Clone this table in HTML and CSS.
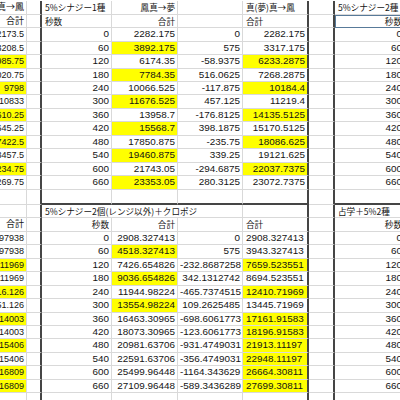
FILE: index.html
```html
<!DOCTYPE html>
<html lang="ja">
<head>
<meta charset="utf-8">
<link rel="stylesheet" href="styles.css">
</head>
<body>
<div class="sheet">
  <div class="row"><div class="j">鳳真→鳳</div><div></div><div class="j l">5%シナジー1種</div><div class="j">鳳真→夢</div><div></div><div class="j l">真(夢)真→鳳</div><div></div><div class="j l">5%シナジー2種</div><div></div></div>
  <div class="row"><div class="j">合計</div><div></div><div class="j l">秒数</div><div class="j">合計</div><div></div><div class="j l">合計</div><div></div><div class="j sel">秒数</div><div></div></div>
  <div class="row"><div>2173.5</div><div></div><div>0</div><div>2282.175</div><div>0</div><div>2282.175</div><div></div><div>0</div><div></div></div>
  <div class="row"><div>3208.5</div><div></div><div>60</div><div class="y">3892.175</div><div>575</div><div>3317.175</div><div></div><div>60</div><div></div></div>
  <div class="row"><div class="y">5985.75</div><div></div><div>120</div><div>6174.35</div><div>-58.9375</div><div class="y">6233.2875</div><div></div><div>120</div><div></div></div>
  <div class="row"><div>7020.75</div><div></div><div>180</div><div class="y">7784.35</div><div>516.0625</div><div>7268.2875</div><div></div><div>180</div><div></div></div>
  <div class="row"><div class="y">9798</div><div></div><div>240</div><div>10066.525</div><div>-117.875</div><div class="y">10184.4</div><div></div><div>240</div><div></div></div>
  <div class="row"><div>10833</div><div></div><div>300</div><div class="y">11676.525</div><div>457.125</div><div>11219.4</div><div></div><div>300</div><div></div></div>
  <div class="row"><div class="y">13610.25</div><div></div><div>360</div><div>13958.7</div><div>-176.8125</div><div class="y">14135.5125</div><div></div><div>360</div><div></div></div>
  <div class="row"><div>14645.25</div><div></div><div>420</div><div class="y">15568.7</div><div>398.1875</div><div>15170.5125</div><div></div><div>420</div><div></div></div>
  <div class="row"><div class="y">17422.5</div><div></div><div>480</div><div>17850.875</div><div>-235.75</div><div class="y">18086.625</div><div></div><div>480</div><div></div></div>
  <div class="row"><div>18457.5</div><div></div><div>540</div><div class="y">19460.875</div><div>339.25</div><div>19121.625</div><div></div><div>540</div><div></div></div>
  <div class="row"><div class="y">21234.75</div><div></div><div>600</div><div>21743.05</div><div>-294.6875</div><div class="y">22037.7375</div><div></div><div>600</div><div></div></div>
  <div class="row"><div>22269.75</div><div></div><div>660</div><div class="y">23353.05</div><div>280.3125</div><div>23072.7375</div><div></div><div>660</div><div></div></div>
  <div class="row gap"><div></div><div></div><div></div><div></div><div></div><div></div><div></div><div></div><div></div></div>
  <div class="row t2"><div></div><div></div><div class="j l span">5%シナジー2個(レンジ以外)＋クロポジ</div><div></div><div></div><div class="j l">占学＋5%2種</div><div></div></div>
  <div class="row"><div class="j">合計</div><div></div><div class="j">秒数</div><div class="j">合計</div><div></div><div class="j l">合計</div><div></div><div class="j">秒数</div><div></div></div>
  <div class="row"><div>2797.197938</div><div></div><div>0</div><div>2908.327413</div><div>0</div><div class="l">2908.327413</div><div></div><div>0</div><div></div></div>
  <div class="row"><div>3832.197938</div><div></div><div>60</div><div class="y">4518.327413</div><div>575</div><div class="l">3943.327413</div><div></div><div>60</div><div></div></div>
  <div class="row"><div class="y">7310.411969</div><div></div><div>120</div><div>7426.654826</div><div>-232.8687258</div><div class="l y">7659.523551</div><div></div><div>120</div><div></div></div>
  <div class="row"><div>8345.411969</div><div></div><div>180</div><div class="y">9036.654826</div><div>342.1312742</div><div class="l">8694.523551</div><div></div><div>180</div><div></div></div>
  <div class="row"><div class="y">11816.126</div><div></div><div>240</div><div>11944.98224</div><div>-465.7374515</div><div class="l y">12410.71969</div><div></div><div>240</div><div></div></div>
  <div class="row"><div>12851.126</div><div></div><div>300</div><div class="y">13554.98224</div><div>109.2625485</div><div class="l">13445.71969</div><div></div><div>300</div><div></div></div>
  <div class="row"><div class="y">16302.14003</div><div></div><div>360</div><div>16463.30965</div><div>-698.6061773</div><div class="l y">17161.91583</div><div></div><div>360</div><div></div></div>
  <div class="row"><div>17337.14003</div><div></div><div>420</div><div>18073.30965</div><div>-123.6061773</div><div class="l y">18196.91583</div><div></div><div>420</div><div></div></div>
  <div class="row"><div class="y">20788.15406</div><div></div><div>480</div><div>20981.63706</div><div>-931.4749031</div><div class="l y">21913.11197</div><div></div><div>480</div><div></div></div>
  <div class="row"><div>21823.15406</div><div></div><div>540</div><div>22591.63706</div><div>-356.4749031</div><div class="l y">22948.11197</div><div></div><div>540</div><div></div></div>
  <div class="row"><div class="y">25274.16809</div><div></div><div>600</div><div>25499.96448</div><div>-1164.343629</div><div class="l y">26664.30811</div><div></div><div>600</div><div></div></div>
  <div class="row"><div class="y">26309.16809</div><div></div><div>660</div><div>27109.96448</div><div>-589.3436289</div><div class="l y">27699.30811</div><div></div><div>660</div><div></div></div>
  <div class="row"><div></div><div></div><div></div><div></div><div></div><div></div><div></div><div></div><div></div></div>
</div>
</body>
</html>
```

FILE: styles.css
```css
html, body {
  margin: 0;
  padding: 0;
  overflow: hidden;
  background: #ffffff;
}

body {
  font-family: "Liberation Sans", "Noto Sans CJK JP", sans-serif;
  font-size: 9.9px;
  color: #141414;
}

.sheet {
  margin: 1.4px 0 0 -40px;
  width: 505px;
}

.row {
  display: grid;
  grid-template-columns: 67px 15px 70px 66px 65px 66px 26px 70px 60px;
  height: 13.45px;
}

.row > div {
  box-sizing: border-box;
  border-right: 1px solid #d9d9d9;
  border-bottom: 1px solid #d9d9d9;
  text-align: right;
  padding: 0 2px 0 2px;
  line-height: 12.45px;
  white-space: nowrap;
  overflow: visible;
}

.row > div:first-child {
  font-size: 9px;
}

.row > div:nth-child(2),
.row > div:nth-child(6),
.row > div:nth-child(7) {
  border-right: 2px solid #454545;
}

.row > .l {
  text-align: left;
  padding-left: 3px;
}

.row > .j {
  font-family: "Noto Sans CJK JP", "Liberation Sans", sans-serif;
  font-size: 8.6px;
}

.y {
  background: #ffff00;
}

.sel {
  outline: 1px solid #587a99;
  outline-offset: -1px;
}

.gap {
  height: 15.5px;
}

.gap > div {
  line-height: 14px;
}

.gap > div:nth-child(3),
.gap > div:nth-child(4),
.gap > div:nth-child(5),
.gap > div:nth-child(6),
.gap > div:nth-child(8) {
  border-bottom: 2px solid #454545;
}

.t2 > .span {
  grid-column: span 3;
}

.t2 > div:nth-child(4),
.t2 > div:nth-child(5) {
  border-right: 2px solid #454545;
}

.t2 > div:nth-child(6),
.t2 > div:nth-child(7) {
  border-right: 1px solid #d9d9d9;
}
```
